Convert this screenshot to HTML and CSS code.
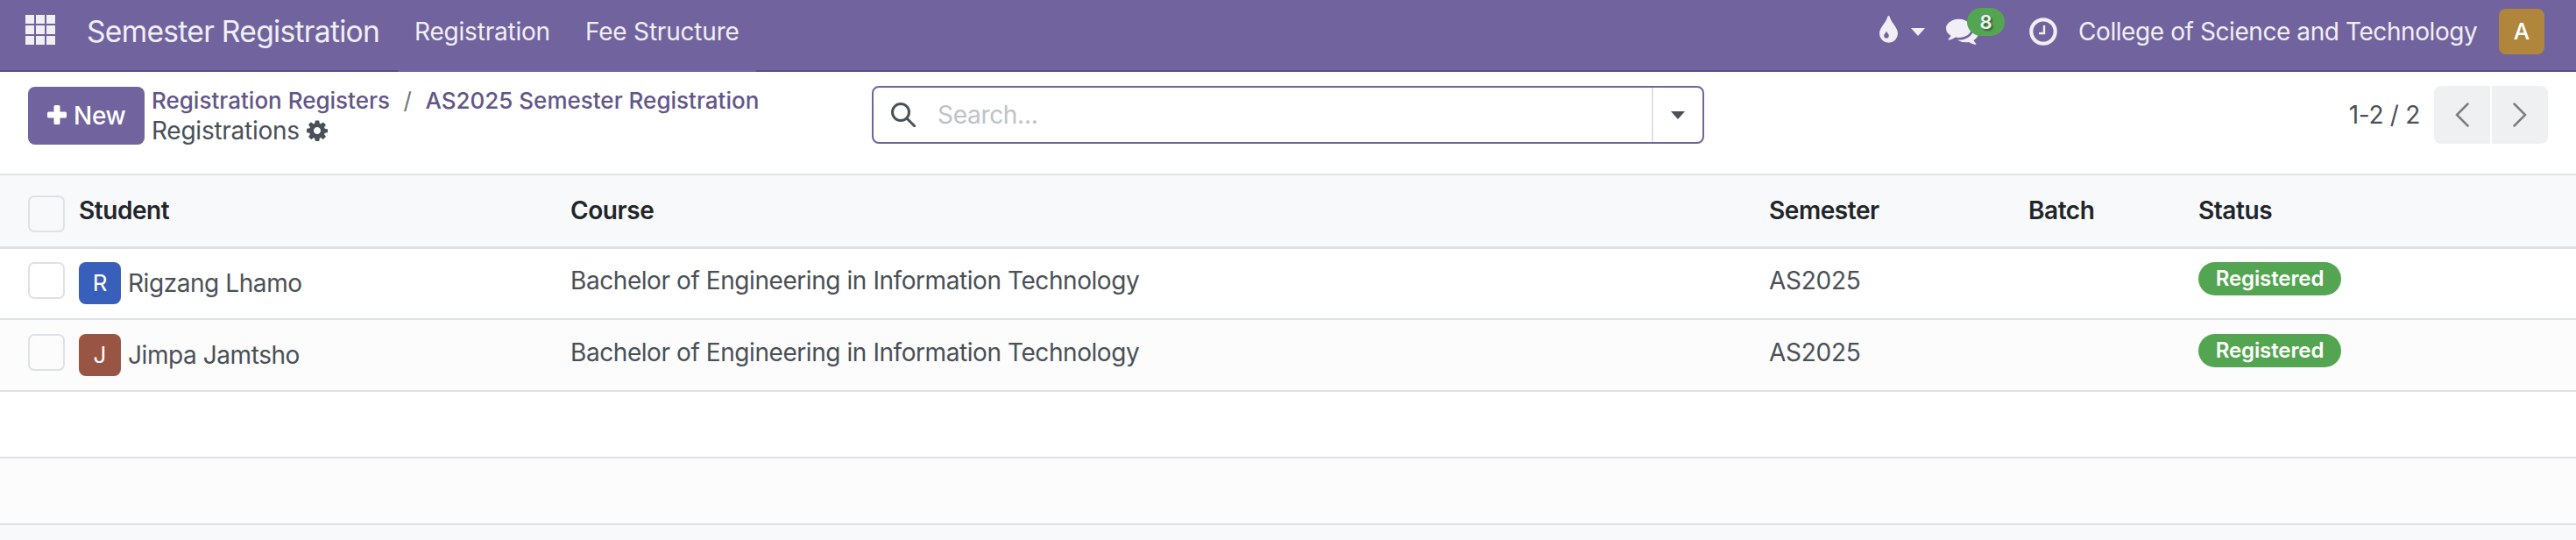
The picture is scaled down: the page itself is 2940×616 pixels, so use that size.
FILE: index.html
```html
<!DOCTYPE html>
<html lang="en">
<head>
<meta charset="utf-8">
<title>Registrations</title>
<link rel="stylesheet" href="styles.css">
</head>
<body>
<header class="navbar">
  <svg class="apps" viewBox="0 0 34 34"><path d="M0 0h10v10H0zM12 0h10v10H12zM24 0h10v10H24zM0 12h10v10H0zM12 12h10v10H12zM24 12h10v10H24zM0 24h10v10H0zM12 24h10v10H12zM24 24h10v10H24z"/></svg>
  <a class="brand">Semester Registration</a>
  <nav class="sections"><a>Registration</a><a>Fee Structure</a></nav>
  <div class="systray">
    <svg class="drop" viewBox="0 0 21 31"><path fill-rule="evenodd" d="M10.5 0C9.600 0 9.200 1.200 9 2C7 8.500 0 13.500 0 20.300A10.500 10.500 0 0 0 21 20.300C21 13.500 14 8.500 12 2C11.800 1.200 11.400 0 10.500 0zM8 17.500C8.500 19.500 10.800 20.600 10.800 22.800A2.800 2.800 0 0 1 5.200 22.800C5.200 20.600 7.500 19.500 8 17.500z"/></svg>
    <i class="caret"></i>
    <div class="chat">
      <svg viewBox="0 0 1792 1536"><path d="M1408 640q0 139-94 257t-256.500 186.500T704 1152q-86 0-176-16-124 88-278 128-36 9-86 16h-3q-11 0-20.500-8t-11.500-21q-1-3-1-6.500t.5-6.500 2-6l2.500-5 3.500-5.500 4-5 4.500-5 4-4.500q5-6 23-25t26-29.500 22.500-29 25-38.500 20.500-44q-124-72-195-177T0 640q0-139 94-257t256.500-186.500T704 128t353.500 68.500T1314 383t94 257zm384 256q0 120-71 224.500T1526 1297q10 24 20.500 44t25 38.500 22.500 29 26 29.500 23 25q1 1 4 4.500t4.500 5 4 5 3.500 5.500l2.500 5 2 6 .5 6.500-1 6.500q-3 14-13 22t-22 7q-50-7-86-16-154-40-278-128-90 16-176 16-271 0-472-132 58 4 88 4 161 0 309-45t264-129q125-92 192-212t67-254q0-77-23-152 129 71 204 178t75 230z"/></svg>
      <b>8</b>
    </div>
    <svg class="clock" viewBox="0 0 32 32"><circle cx="16" cy="16" r="13.700"/><path d="M17 9v9h-6"/></svg>
    <span class="company">College of Science and Technology</span>
    <span class="user">A</span>
  </div>
</header>
<section class="panel">
  <button class="new"><svg viewBox="0 0 22 22"><path d="M9 0h4q1.500 0 1.500 1.500v6h6q1.500 0 1.500 1.500v4q0 1.500-1.500 1.500h-6v6q0 1.500-1.500 1.500H9q-1.500 0-1.500-1.500v-6h-6Q0 14.500 0 13V9q0-1.500 1.500-1.500h6v-6Q7.500 0 9 0z"/></svg><span>New</span></button>
  <div class="crumbs">
    <div class="trail"><a>Registration Registers</a><i>/</i><a>AS2025 Semester Registration</a></div>
    <div class="current"><span>Registrations</span><svg viewBox="0 128 1536 1536"><path d="M1024 896q0-106-75-181t-181-75-181 75-75 181 75 181 181 75 181-75 75-181zm512-109v222q0 12-8 23t-20 13l-185 28q-19 54-39 91 35 50 107 138 10 12 10 25t-9 23q-27 37-99 108t-94 71q-12 0-26-9l-138-108q-44 23-91 38-16 136-29 186-7 28-36 28H657q-14 0-24.500-8.500T621 1640l-28-184q-49-16-90-37l-141 107q-10 9-25 9-14 0-25-11-126-114-165-168-7-10-7-23 0-12 8-23 15-21 51-66.500t54-70.500q-27-50-41-99l-183-27q-13-2-21-12.500t-8-23.500V788q0-12 8-23t19-13l186-28q14-46 39-92-40-57-107-138-10-12-10-24 0-10 9-23 26-36 98.500-107.500T337 291q13 0 26 10l138 107q44-23 91-38 16-136 29-186 7-28 36-28h222q14 0 24.500 8.500T915 186l28 184q49 16 90 37l142-107q9-9 24-9 13 0 25 10 129 119 165 170 7 8 7 22 0 12-8 23-15 21-51 66.500t-54 70.500q26 50 41 98l183 28q13 2 21 12.500t8 23.500z"/></svg></div>
  </div>
  <div class="search">
    <svg viewBox="0 0 28 28"><circle cx="11" cy="11" r="9.500"/><path d="M18 18l9 9"/></svg>
    <span class="placeholder">Search...</span>
    <div class="toggle"><i class="caret"></i></div>
  </div>
  <div class="pager">
    <span class="range">1-2 / 2</span>
    <div class="pages">
      <button><svg viewBox="0 0 16 28"><path d="M14.500 1.500L2 14l12.500 12.500"/></svg></button>
      <button><svg viewBox="0 0 16 28"><path d="M1.500 1.500L14 14L1.500 26.500"/></svg></button>
    </div>
  </div>
</section>
<main class="list">
  <div class="row head"><i class="check"></i><span>Student</span><span>Course</span><span>Semester</span><span>Batch</span><span>Status</span></div>
  <div class="row"><i class="check"></i><div class="student"><span class="avatar blue">R</span><span>Rigzang Lhamo</span></div><span class="course">Bachelor of Engineering in Information Technology</span><span class="sem">AS2025</span><span></span><span class="badge">Registered</span></div>
  <div class="row alt"><i class="check"></i><div class="student"><span class="avatar brown">J</span><span>Jimpa Jamtsho</span></div><span class="course">Bachelor of Engineering in Information Technology</span><span class="sem">AS2025</span><span></span><span class="badge">Registered</span></div>
  <div class="row empty"></div>
  <div class="row empty alt"></div>
</main>
</body>
</html>
```
FILE: styles.css
```css
* { box-sizing: border-box; }
body { margin: 0; height: 616px; overflow: hidden; background: #f8f9fa; color: #495057; font: 400 28px/42px Inter, "Liberation Sans", sans-serif; }
svg { display: block; flex: none; }
i { font-style: normal; }
button { border: 0; padding: 0; font: inherit; }
.caret { border: 8.500px solid transparent; border-top: 9px solid currentColor; border-bottom: 0; }

.navbar { display: flex; height: 82px; background: #71639e; border-bottom: 2px solid #5a4f7f; color: #f0eff5; }
.apps { width: 34px; height: 34px; margin: 17px 0 0 29px; fill: currentColor; }
.brand { width: 391px; padding: 15px 0 0 36px; font-size: 33.600px; letter-spacing: -.7px; white-space: nowrap; }
.sections { display: flex; width: 409px; height: 82px; padding: 15px 0 0 19px; gap: 40px; background: #71639e; letter-spacing: -.2px; white-space: nowrap; }
.systray { display: flex; margin-left: auto; padding-right: 36px; white-space: nowrap; }
.drop { width: 21px; height: 31px; margin: 18px 15px 0 0; fill: currentColor; }
.systray .caret { height: 9px; margin: 32px 24px 0 0; }
.chat { position: relative; width: 95px; padding-top: 19px; }
.chat svg { width: 37px; height: 32px; fill: currentColor; }
.chat b { position: absolute; left: 24px; top: 9px; width: 43px; height: 32px; border-radius: 16px; background: #54a551; font-weight: 600; font-size: 22px; line-height: 32px; text-align: center; text-shadow: 2px 2px 2px rgba(0,0,0,.4); }
.clock { width: 32px; height: 32px; margin: 20px 24px 0 0; fill: none; stroke: currentColor; stroke-width: 4.200; }
.clock path { stroke-width: 2.400; }
.company { padding-top: 15px; width: 480px; letter-spacing: -.42px; }
.user { width: 52px; height: 52px; margin-top: 10px; border-radius: 8px; background: #b0863c; color: #fff; font-weight: 500; font-size: 26px; line-height: 52px; text-align: center; }

.panel { display: flex; height: 118px; padding: 16px 32px 0; background: #fff; border-bottom: 2px solid #dee2e6; white-space: nowrap; }
.new { display: flex; width: 133px; height: 66px; margin-top: 1px; padding: 0 22px; gap: 8px; border-radius: 8px; background: #71639e; color: #fff; font-weight: 500; letter-spacing: -.3px; line-height: 66px; }
.new svg { width: 22px; height: 22px; margin-top: 21px; fill: currentColor; }
.crumbs { width: 830px; margin-top: -1px; padding-left: 8px; line-height: 35px; }
.trail { display: flex; font-size: 26px; font-weight: 500; color: #625689; }
.trail i { margin: 0 15.500px; color: #6c757d; font-weight: 400; }
.current { display: flex; gap: 8px; letter-spacing: -.25px; }
.current svg { width: 24px; height: 24px; margin-top: 5px; fill: currentColor; }
.search { display: flex; width: 950px; height: 66px; border: 2px solid #71639e; border-radius: 8px; }
.search svg { width: 28px; height: 28px; margin: 17px 25px 0 20px; fill: none; stroke: #495057; stroke-width: 3; stroke-linecap: round; }
.placeholder { padding-top: 10px; color: #bdc3c9; letter-spacing: -.3px; }
.toggle { display: flex; align-items: center; justify-content: center; width: 58px; margin-left: auto; border-left: 2px solid #dee2e6; }
.pager { display: flex; margin-left: auto; }
.range { padding-top: 12px; margin-right: 16px; letter-spacing: -.3px; }
.pages { display: flex; gap: 2px; height: 66px; overflow: hidden; border-radius: 8px; }
.pages button { display: flex; align-items: center; justify-content: center; width: 64px; background: #eff0f2; }
.pages svg { width: 16px; height: 28px; fill: none; stroke: #7d7d80; stroke-width: 2.500; stroke-linecap: round; }

.row { display: grid; grid-template-columns: 58px 561px 1368px 296px 194px 1fr; align-items: start; height: 82px; padding: 15px 0 0 32px; background: #fff; border-bottom: 2px solid #dee2e6; letter-spacing: -.43px; white-space: nowrap; }
.row.alt { background: #fcfcfc; }
.row.head { height: 84px; padding-top: 19px; background: #f8f9fa; border-bottom-width: 3px; color: #212529; font-weight: 600; }
.row.head + .row { height: 81px; }
.row.head ~ .row.alt { padding-top: 16px; }
.row.empty { height: 76px; }
.sem { letter-spacing: -.25px; }
.check { width: 42px; height: 42px; border: 2px solid #dee2e6; border-radius: 7px; }
.head .check { margin-top: 4px; }
.student { display: flex; gap: 8px; line-height: 48px; }
.avatar { width: 48px; height: 48px; border-radius: 8px; color: #fff; font-size: 26px; letter-spacing: 0; text-align: center; }
.blue { background: #3860ba; }
.brown { background: #995543; }
.badge { justify-self: start; width: 163px; height: 38px; border-radius: 19px; background: #54a551; color: #fff; font-weight: 600; font-size: 24px; letter-spacing: -.1px; line-height: 38px; text-align: center; }
```
